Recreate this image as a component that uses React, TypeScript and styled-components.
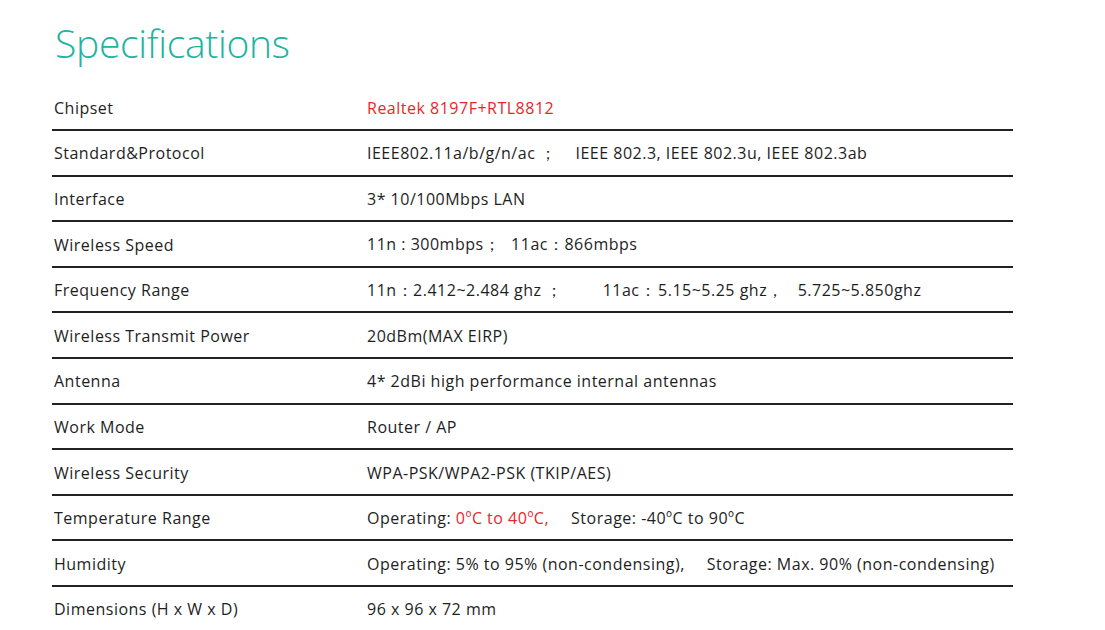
import React from "react";
import styled, { createGlobalStyle } from "styled-components";

const GlobalStyle = createGlobalStyle`
  html, body {
    margin: 0;
    padding: 0;
    background: #ffffff;
  }
  body {
    font-family: "Open Sans", "Noto Sans", sans-serif;
    color: #1e1e1e;
  }
`;

const Page = styled.div`
  width: 1105px;
  height: 630px;
  padding-left: 52px;
  box-sizing: border-box;
  overflow: hidden;
`;

const Title = styled.h1`
  margin: 0;
  height: 85.5px;
  padding-left: 3px;
  font-family: "Open Sans", sans-serif;
  font-weight: 300;
  font-size: 39px;
  line-height: 86px;
  letter-spacing: -0.3px;
  color: #22b3a0;
`;

const Table = styled.div`
  width: 961px;
  display: flex;
  flex-direction: column;
`;

const Row = styled.div<{ $last?: boolean }>`
  display: grid;
  grid-template-columns: 315px 1fr;
  align-items: center;
  height: 43.6px;
  border-bottom: ${(p) => (p.$last ? "none" : "2px solid #222222")};
  font-size: 16px;
  letter-spacing: 0.5px;
`;

const Label = styled.div`
  padding-left: 2px;
  padding-top: 1px;
`;

const Value = styled.div`
  white-space: pre;
  padding-top: 1px;
`;

const Red = styled.span`
  color: #e8262a;
`;

const Gap = styled.span<{ $w: number }>`
  display: inline-block;
  width: ${(p) => p.$w}px;
`;

type Spec = { label: string; value: React.ReactNode };

const specs: Spec[] = [
  { label: "Chipset", value: <Red>Realtek 8197F+RTL8812</Red> },
  {
    label: "Standard&Protocol",
    value: (
      <>
        IEEE802.11a/b/g/n/ac ；<Gap $w={19} />IEEE 802.3, IEEE 802.3u, IEEE 802.3ab
      </>
    ),
  },
  { label: "Interface", value: "3* 10/100Mbps LAN" },
  {
    label: "Wireless Speed",
    value: (
      <>
        11n : 300mbps；<Gap $w={11} />11ac：866mbps
      </>
    ),
  },
  {
    label: "Frequency Range",
    value: (
      <>
        11n：2.412~2.484 ghz ；<Gap $w={40} />11ac：<Gap $w={2} />5.15~5.25 ghz，<Gap $w={14} />5.725~5.850ghz
      </>
    ),
  },
  { label: "Wireless Transmit Power", value: "20dBm(MAX EIRP)" },
  { label: "Antenna", value: "4* 2dBi high performance internal antennas" },
  { label: "Work Mode", value: "Router / AP" },
  { label: "Wireless Security", value: "WPA-PSK/WPA2-PSK (TKIP/AES)" },
  {
    label: "Temperature Range",
    value: (
      <>
        Operating: <Red>0ºC to 40ºC,</Red>
        <Gap $w={22} />Storage: -40ºC to 90ºC
      </>
    ),
  },
  {
    label: "Humidity",
    value: (
      <>
        Operating: 5% to 95% (non-condensing),<Gap $w={22} />Storage: Max. 90% (non-condensing)
      </>
    ),
  },
  { label: "Dimensions (H x W x D)", value: "96 x 96 x 72 mm" },
];

export default function App() {
  return (
    <Page>
      <GlobalStyle />
      <Title>Specifications</Title>
      <Table>
        {specs.map((s, i) => (
          <Row key={s.label} $last={i === specs.length - 1}>
            <Label>{s.label}</Label>
            <Value>{s.value}</Value>
          </Row>
        ))}
      </Table>
    </Page>
  );
}
